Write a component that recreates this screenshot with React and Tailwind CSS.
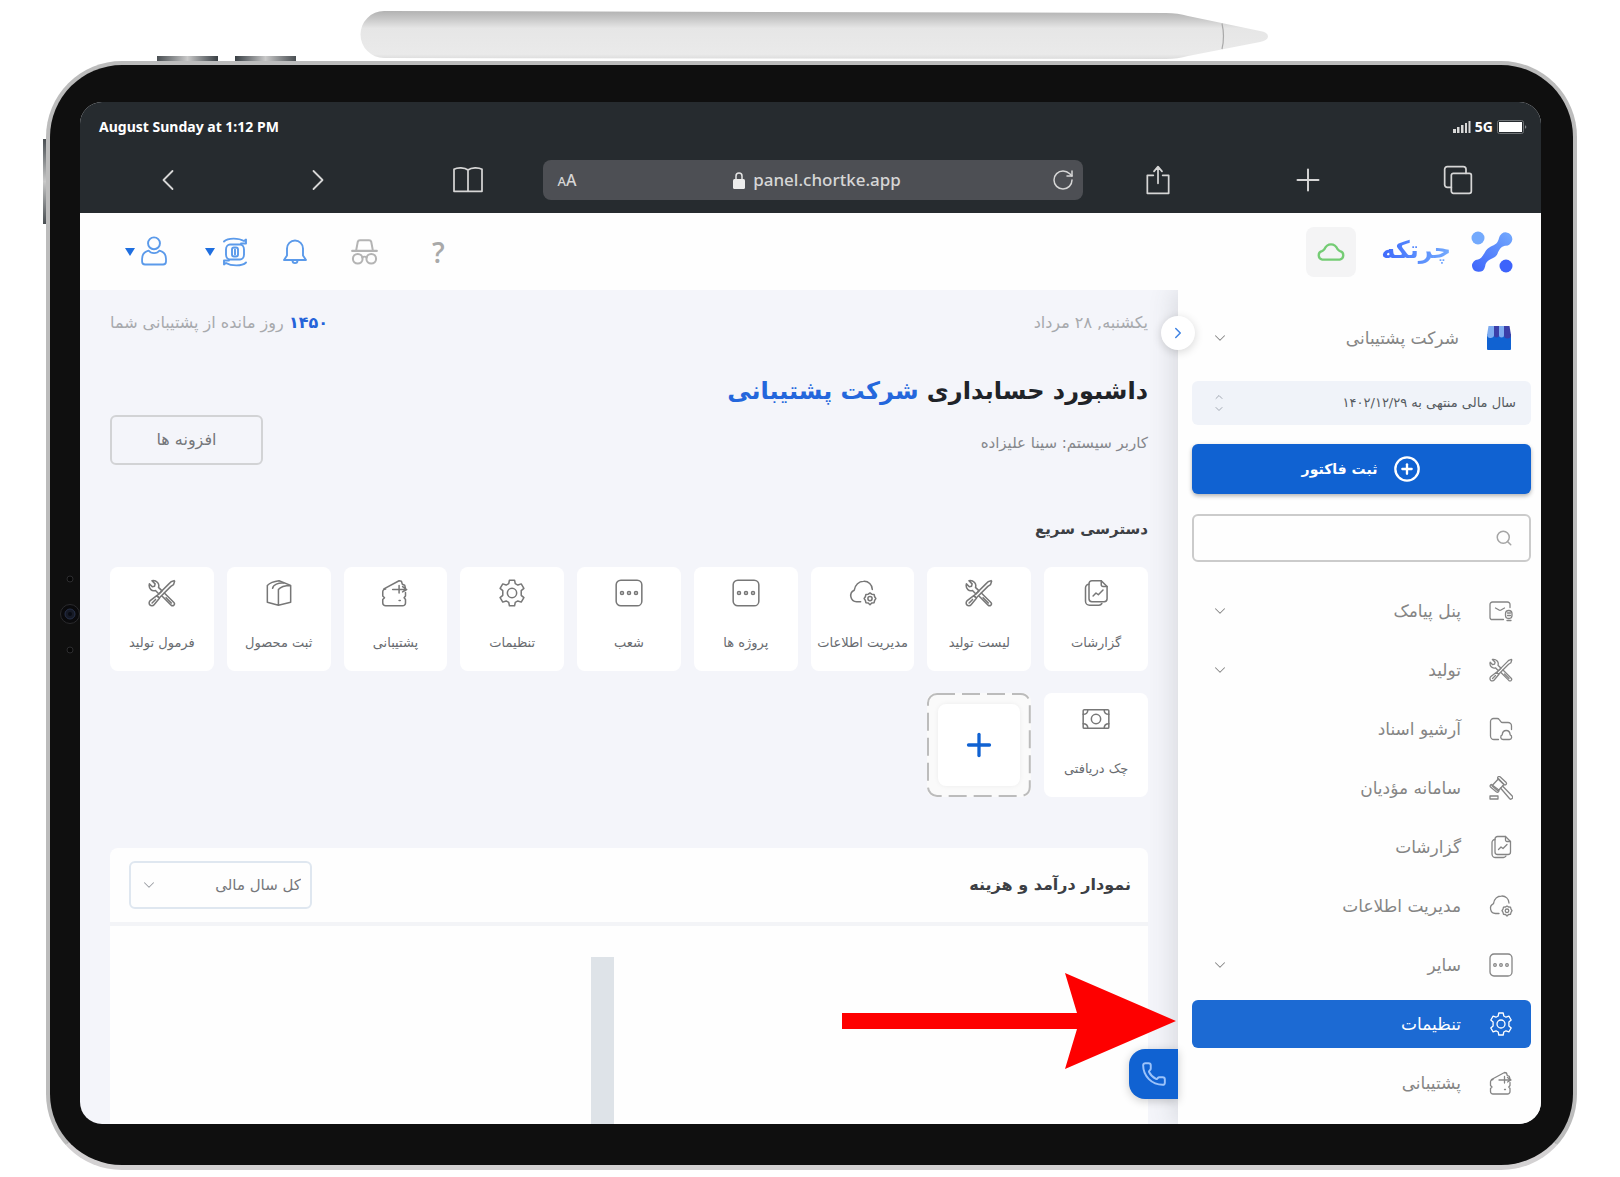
import React, { useState } from 'react';
import { ChevronDown, ChevronLeft, ChevronRight, ChevronUp, CirclePlus, Phone, Plus, RotateCw, Search } from 'lucide-react';

const Icon = ({ className = 'h-6 w-6', strokeWidth = 1.3, children }) => (
  <svg
    className={className}
    viewBox="0 0 24 24"
    fill="none"
    stroke="currentColor"
    strokeWidth={strokeWidth}
    strokeLinecap="round"
    strokeLinejoin="round"
    aria-hidden="true"
  >
    {children}
  </svg>
);

const SmsIcon = (props) => (
  <Icon {...props}>
    <path d="M14.5 20.500H3.500A2 2 0 0 1 1 18.500V5.500A2.500 2.500 0 0 1 3.500 3h15A2.500 2.500 0 0 1 21 5.500v3" />
    <path d="M6.500 9l3.500 2a2 2 0 0 0 2 0l3.500-2" />
    <rect x="16.500" y="11.500" width="6.500" height="8" rx="3.200" />
    <path d="M18.500 14h3M18.500 16.500h3M18 21.500h4" />
  </Icon>
);

const ToolsIcon = (props) => (
  <Icon {...props}>
    <path d="M1.200 4.200c-.5 2 .1 3.800 1.300 4.900 1 .9 2.600 1.100 3.900.7l3 3 2.600-2.600-3-3c.5-1.500.2-3.100-.8-4.200C7 1.800 5.200 1.100 3.400 1.500l2.700 2.700-.5 2-1.900.5z" />
    <path d="M14 12l8.200 8.200a1.600 1.600 0 0 1 0 2.200 1.800 1.800 0 0 1-2.400 0L12.200 14.800" />
    <path d="M19.800 2.300l2.600-.9.400.5-.9 2.900-2.300 1.500-10 10-1.900-1.900 10-10z" />
    <path d="M7.500 14.200l2.300 2.300-4.600 5.500a2.400 2.400 0 0 1-3.600.2 2.500 2.500 0 0 1 .3-3.600z" />
    <path d="M3.500 20.500l3-3M15.500 16l4.500 4.500" />
  </Icon>
);

const ArchiveIcon = (props) => (
  <Icon {...props}>
    <path d="M9.500 22.500H5A3.500 3.500 0 0 1 1.500 19V4.500A3 3 0 0 1 4.500 1.500h3.700c.9 0 1.600.4 2.100 1.100l1.500 2c.4.600 1 .9 1.700.9H19A3.500 3.500 0 0 1 22.500 9v3.500" />
    <path d="M14 22.500a2.400 2.400 0 0 1-.8-4.600c.2-2.500 1.800-4.400 4-4.400s3.800 1.900 4 4.400a2.400 2.400 0 0 1-.8 4.600z" />
  </Icon>
);

const GavelIcon = (props) => (
  <Icon {...props}>
    <path d="M9.500 2.800L3 9.800l6 5.200 6-6.500z" />
    <path d="M11.300 1a1.500 1.500 0 0 0-2.300 2l6 5.500a1.500 1.500 0 0 0 2.200-2zM2.500 8.500a1.500 1.500 0 0 0-1 2.500l6 5a1.500 1.500 0 0 0 2-2.200z" />
    <path d="M11.500 12l9 10.500a1.700 1.700 0 0 0 2.700-2.500L13.500 10" />
    <path d="M1 20h8v3H1z" />
  </Icon>
);

const ReportIcon = (props) => (
  <Icon {...props}>
    <path d="M8.500 1.500h8l5 5V17a2.500 2.500 0 0 1-2.500 2.500H8.500A2.500 2.500 0 0 1 6 17V4a2.500 2.500 0 0 1 2.500-2.500z" />
    <path d="M16.500 1.500V5A1.500 1.500 0 0 0 18 6.500h3.500" />
    <path d="M6 4.500A3 3 0 0 0 3 7.500V19a3.500 3.500 0 0 0 3.500 3.500h8a3 3 0 0 0 2.500-1.500" />
    <path d="M9.500 14.500l2.500-2.500 2 1.500 4-4" />
  </Icon>
);

const CloudDataIcon = (props) => (
  <Icon {...props}>
    <path d="M10 19.500H6.500A5.200 5.200 0 0 1 4.500 9.600c.7-4.600 4-7.600 8-7.600a7 7 0 0 1 7.500 7" />
    <path d="M18 12l1.500 1 2 .2.500 2 1 1.500-1 1.600-.5 2-2 .2-1.500 1.500-1.500-1.500-2-.2-.5-2-1-1.600 1-1.500.5-2 2-.2z" />
    <circle cx="18" cy="16.800" r="1.800" />
  </Icon>
);

const DotsIcon = (props) => (
  <Icon {...props}>
    <rect x="1" y="1" width="22" height="22" rx="4" />
    <circle cx="6" cy="12" r="1.300" />
    <circle cx="12" cy="12" r="1.300" />
    <circle cx="18" cy="12" r="1.300" />
  </Icon>
);

const GearIcon = (props) => (
  <Icon {...props}>
    <circle cx="12" cy="12" r="4" />
    <path d="M9.800 1h4.400l.6 3 2.200 1.200 2.900-1 2.300 3.800-2.300 2v4l2.300 2-2.300 3.800-2.900-1-2.200 1.200-.6 3H9.800l-.6-3L7 18.800l-2.900 1L1.800 16l2.300-2v-4l-2.300-2 2.300-3.800 2.900 1L9.200 4z" />
  </Icon>
);

const SupportIcon = (props) => (
  <Icon {...props}>
    <path d="M4 23a2.500 2.500 0 0 1-2.500-2.500v-3L3 16l-1.500-1.500V11A2.500 2.500 0 0 1 4 8.500M21 14.500L19.800 16l1.200 1.500v3a2.500 2.500 0 0 1-2.500 2.500H4M21 14.500V11.500" />
    <path d="M2.500 8.500L15.500 1.500l2 .5.800 2.500 2 .8.800 3.200M10 9h12M18.500 11l3.500-2-3.500-2.500M15.500 5.500V12M16.500 18.500h-1" />
  </Icon>
);

const BoxIcon = (props) => (
  <Icon {...props}>
    <path d="M2 5.500V20L11.500 22.500V9M11.500 22.500L22 20V5.500M11.500 9C13 7 17 5.500 22 5.500M2 5.500C4 3.500 8 2 12 1.500l10 4" />
    <path d="M6.500 8c.5-3 5-5 9.500-4.500" />
  </Icon>
);

const CashIcon = (props) => (
  <Icon {...props}>
    <rect x="1" y="4" width="22" height="16" rx="1" />
    <circle cx="12" cy="12" r="4" />
    <path d="M1 8c2.500 0 4-1.500 4-4M23 8c-2.500 0-4-1.500-4-4M1 16c2.500 0 4 1.500 4 4M23 16c-2.500 0-4 1.500-4 4" />
  </Icon>
);

const StoreIcon = () => (
  <svg className="h-6 w-6" viewBox="0 0 24 24" aria-hidden="true">
    <path d="M0 8h24v15a1 1 0 0 1-1 1H1a1 1 0 0 1-1-1z" fill="#1062d2" />
    <path d="M1.500 0H7v8a3.500 3.500 0 0 1-7 1z" fill="#7eacf0" />
    <path d="M12 0h5v9a2.500 2.500 0 0 1-5 0z" fill="#7eacf0" />
    <path d="M7 0h5v9a2.500 2.500 0 0 1-5 0z" fill="#3b3fa8" />
    <path d="M17 0h5.500L24 9a3.500 3.500 0 0 1-7 0z" fill="#3b3fa8" />
  </svg>
);

const LogoMark = () => (
  <svg className="h-[42px] w-[42px]" viewBox="0 0 42 42" aria-hidden="true">
    <defs>
      <linearGradient id="logoStroke" x1="0" y1="1" x2="1" y2="0">
        <stop offset="0" stopColor="#3d63fb" />
        <stop offset="1" stopColor="#74aafd" />
      </linearGradient>
    </defs>
    <path
      d="M1 35a6.500 6.500 0 0 1 6-6.500c4-1 6-6 8-9 1.500-2.500 4-3.500 7-5 3-1.500 5-3 6-7.500a6.700 6.700 0 1 1 6 7.700c-4 .8-6 4-7.500 8-1.500 3.500-4 4-7 5.500-3 1.500-5 3.500-5.500 7.500A6.600 6.600 0 0 1 1 35z"
      fill="url(#logoStroke)"
    />
    <circle cx="7" cy="7" r="6.500" fill="#74aafd" />
    <circle cx="35" cy="35" r="6.500" fill="#3d63fb" />
  </svg>
);

const UserIcon = () => (
  <Icon className="h-8 w-[26px]" strokeWidth={1.8}>
    <circle cx="12" cy="4" r="5.500" />
    <path d="M6.500 10.500C2.500 11.500 0 14.500 0 19v2.500A3 3 0 0 0 3 24.500h18a3 3 0 0 0 3-3V19c0-4.500-2.500-7.500-6.500-8.500-2.500 3.500-8.500 3.500-11 0z" transform="translate(1 1) scale(0.920)" />
  </Icon>
);

const CoinIcon = () => (
  <Icon className="h-8 w-6" strokeWidth={1.9}>
    <path d="M7 4.500h10c2 0 4 2 4 5v5c0 3-2 5-4 5H7c-2 0-4-2-4-5v-5c0-3 2-5 4-5z" />
    <rect x="9" y="7.500" width="6" height="9" rx="2" />
    <path d="M12 9.500v5M1 1.500C5-2.500 16-2 21 1l2-1.500v4h-5M23 22.500c-4 4-15 3.500-20 .5l-2 1.500v-4h5" />
  </Icon>
);

const BellIcon = () => (
  <Icon className="h-7 w-6" strokeWidth={1.9}>
    <path d="M4 8.500a8 8 0 0 1 16 0v7l3 4.500H1l3-4.500zM9.500 20.500c0 3.500 5 3.500 5 0" />
  </Icon>
);

const SpyIcon = () => (
  <Icon className="h-7 w-[27px]" strokeWidth={1.8}>
    <path d="M1 11h22M4.500 11l1.500-8A2 2 0 0 1 8 1.500h8A2 2 0 0 1 18 3l1.500 8" />
    <circle cx="6" cy="18" r="4.300" />
    <circle cx="18" cy="18" r="4.300" />
    <path d="M10 17c1-1 3-1 4 0" />
  </Icon>
);

const CloudIcon = () => (
  <Icon className="h-7 w-7" strokeWidth={2}>
    <path d="M4.500 18.500a3.700 3.700 0 0 1-.3-7.200c.8-.3 1.500-.8 2-1.500C7.500 7 9.800 5.500 12 5.500s4.500 1.500 5.800 4.300c.5.700 1.200 1.200 2 1.500a3.700 3.700 0 0 1-.3 7.200z" />
  </Icon>
);

const menuItems = [
  { key: 'sms', label: 'پنل پیامک', icon: SmsIcon, hasChildren: true },
  { key: 'production', label: 'تولید', icon: ToolsIcon, hasChildren: true },
  { key: 'archive', label: 'آرشیو اسناد', icon: ArchiveIcon },
  { key: 'tax', label: 'سامانه مؤدیان', icon: GavelIcon },
  { key: 'reports', label: 'گزارشات', icon: ReportIcon },
  { key: 'data', label: 'مدیریت اطلاعات', icon: CloudDataIcon },
  { key: 'other', label: 'سایر', icon: DotsIcon, hasChildren: true },
  { key: 'settings', label: 'تنظیمات', icon: GearIcon },
  { key: 'support', label: 'پشتیبانی', icon: SupportIcon }
];

const shortcuts = [
  { key: 'reports', label: 'گزارشات', icon: ReportIcon },
  { key: 'production-list', label: 'لیست تولید', icon: ToolsIcon },
  { key: 'data', label: 'مدیریت اطلاعات', icon: CloudDataIcon },
  { key: 'projects', label: 'پروژه ها', icon: DotsIcon },
  { key: 'branches', label: 'شعب', icon: DotsIcon },
  { key: 'settings', label: 'تنظیمات', icon: GearIcon },
  { key: 'support', label: 'پشتیبانی', icon: SupportIcon },
  { key: 'product', label: 'ثبت محصول', icon: BoxIcon },
  { key: 'formula', label: 'فرمول تولید', icon: ToolsIcon },
  { key: 'cheque', label: 'چک دریافتی', icon: CashIcon }
];

const Pencil = () => (
  <svg className="h-12 w-[909px]" viewBox="0 0 909 48" aria-hidden="true">
    <defs>
      <linearGradient id="pencilBody" x1="0" y1="0" x2="0" y2="1">
        <stop offset="0" stopColor="#b2b2b2" />
        <stop offset="0.150" stopColor="#c6c6c6" />
        <stop offset="0.360" stopColor="#e6e6e6" />
        <stop offset="0.900" stopColor="#eaeaea" />
        <stop offset="1" stopColor="#dcdcdc" />
      </linearGradient>
    </defs>
    <path
      d="M24 0L806 2Q818 2 828 5L900 20Q908 21 908 25.500Q908 29 900 31L828 45Q818 48 806 48L24 47A23.500 23.500 0 0 1 24 0z"
      fill="url(#pencilBody)"
    />
    <path d="M862 12.500q3 13 0 25.500" fill="none" stroke="#a9a9a9" strokeWidth="1.200" />
  </svg>
);

const BrowserBar = () => (
  <div dir="ltr" className="h-[111px] bg-[#262b2f] font-['Noto_Sans','Open_Sans',sans-serif] text-[#d6d6d6]">
    <div className="flex h-[50px] items-center justify-between pr-[14px] pl-[19px] text-[14px] leading-5 font-bold text-white">
      <span>August Sunday at 1:12 PM</span>
      <div className="flex items-center gap-1">
        <svg className="h-3 w-[18px]" viewBox="0 0 18 12" fill="#d8d8d8" aria-hidden="true">
          <path d="M0 8h3v4H0zM4 6h2.500v6H4zM8 4h2.500v8H8zM12 2h2v10h-2zM15.500 0h2v12h-2z" />
        </svg>
        <span>5G</span>
        <svg className="h-[14px] w-[30px]" viewBox="0 0 30 14" aria-hidden="true">
          <rect x="0.500" y="0.500" width="26" height="13" rx="2" fill="none" stroke="#6f7376" />
          <rect x="2" y="2" width="23" height="10" fill="#fff" />
          <path d="M28 5v4l1.500-2z" fill="#8a8d90" />
        </svg>
      </div>
    </div>
    <div className="flex h-14 items-center pr-2 pl-[13px]">
      <button aria-label="Back" className="flex w-[150px] justify-center">
        <ChevronLeft className="h-9 w-9" strokeWidth={1.2} />
      </button>
      <button aria-label="Forward" className="flex w-[150px] justify-center">
        <ChevronRight className="h-9 w-9" strokeWidth={1.2} />
      </button>
      <button aria-label="Bookmarks" className="flex w-[150px] justify-center">
        <Icon className="h-8 w-8">
          <path d="M12 4.500v16M12 4.500C9.500 2.500 4 2.500 1.500 4v16.500h21V4C20 2.500 14.500 2.500 12 4.500z" />
        </Icon>
      </button>
      <div className="flex h-10 min-w-0 flex-1 items-center justify-between rounded-lg bg-[#4d4f54] px-2 text-[17px] leading-5 font-medium">
        <button aria-label="Text size" className="w-8 text-[16px]">
          <span className="text-[13px]">A</span>A
        </button>
        <a href="#site" className="flex items-center gap-2">
          <svg className="h-[18px] w-3" viewBox="0 0 12 18" aria-hidden="true">
            <path d="M3 9V5a3 3 0 0 1 6 0v4" fill="none" stroke="#e5e5e5" strokeWidth="1.500" />
            <rect x="0" y="8" width="12" height="10" rx="1.500" fill="#ececec" />
          </svg>
          panel.chortke.app
        </a>
        <button aria-label="Reload">
          <RotateCw className="h-6 w-6" strokeWidth={1.5} />
        </button>
      </div>
      <button aria-label="Share" className="flex w-[150px] justify-center">
        <Icon className="h-8 w-8">
          <path d="M8.500 8.500H4v13.500h16V8.500h-4.500M12 14.500V3M9 5.500L12 2l3 3.500" />
        </Icon>
      </button>
      <button aria-label="New tab" className="flex w-[150px] justify-center">
        <Plus className="h-9 w-9" strokeWidth={1.300} />
      </button>
      <button aria-label="Tabs" className="flex w-[150px] justify-center">
        <Icon className="h-8 w-8">
          <rect x="7" y="7" width="15" height="15" rx="1.500" />
          <path d="M7 17.500H4A2 2 0 0 1 2 15.500V4a2 2 0 0 1 2-2h12a2 2 0 0 1 2 2v3" />
        </Icon>
      </button>
    </div>
  </div>
);

const Caret = () => (
  <svg className="h-2 w-[10px]" viewBox="0 0 10 8" fill="#1f6fe0" aria-hidden="true">
    <path d="M0 0h10L5 8z" />
  </svg>
);

const AppHeader = () => (
  <header className="flex h-[77px] items-center justify-between bg-[#fefefe] pr-7 pl-[45px]">
    <div className="flex items-center">
      <LogoMark />
      <span className="mr-5 h-[50px] w-[76px] bg-linear-to-l from-[#74aafd] to-[#3d63fb] bg-clip-text text-[24px] leading-[46px] font-bold whitespace-nowrap text-transparent">
        چرتکه
      </span>
      <button aria-label="وضعیت اتصال" className="mr-[19px] flex h-[50px] w-[50px] items-center justify-center rounded-lg bg-[#f4f4f5] text-[#74cc74]">
        <CloudIcon />
      </button>
    </div>
    <div className="flex items-center text-[#5b9aea]">
      <button aria-label="راهنما" className="ml-[54px] font-['Open_Sans',sans-serif] text-[28px] leading-8 font-semibold text-[#a9a9a9]">
        ?
      </button>
      <button aria-label="حالت ناشناس" className="ml-[44px] text-[#b4b4b4]">
        <SpyIcon />
      </button>
      <button aria-label="اعلان ها" className="ml-[36px]">
        <BellIcon />
      </button>
      <button aria-label="واحد پول" className="ml-[38px] flex items-center gap-2">
        <CoinIcon />
        <Caret />
      </button>
      <button aria-label="حساب کاربری" className="flex items-center gap-[6px]">
        <UserIcon />
        <Caret />
      </button>
    </div>
  </header>
);

const Sidebar = () => {
  const [active, setActive] = useState('settings');

  return (
    <aside className="relative w-[363px] shrink-0 bg-[#fefefe] pt-6 pr-[10px] pb-[17px] pl-[14px] text-[#858585] shadow-[-4px_0_24px_rgba(70,72,80,0.16)]">
      <button aria-label="بستن منو" className="absolute top-[26px] -left-[17px] flex h-[34px] w-[34px] items-center justify-center rounded-full bg-white text-[#3f83e3] shadow-[0_2px_10px_rgba(0,0,0,0.16)]">
        <ChevronRight className="h-[18px] w-[18px]" strokeWidth={2} />
      </button>

      <button className="flex h-12 w-full items-center pr-5 pl-[19px]">
        <StoreIcon />
        <span className="mr-7 text-[17px] leading-6">شرکت پشتیبانی</span>
        <ChevronDown className="mr-auto h-[18px] w-[18px]" strokeWidth={1.4} />
      </button>

      {/* Fiscal year */}
      <div className="relative mt-[19px] text-[#555a60]">
        <select aria-label="سال مالی" className="h-11 w-full appearance-none rounded-md bg-[#f0f3f9] pr-[15px] pl-10 text-[13px] leading-5">
          <option>سال مالی منتهی به ۱۴۰۲/۱۲/۲۹</option>
        </select>
        <div className="pointer-events-none absolute top-[10px] left-5 text-[#a3a9b3]">
          <ChevronUp className="h-3 w-[14px]" strokeWidth={2} />
          <ChevronDown className="h-3 w-[14px]" strokeWidth={2} />
        </div>
      </div>

      <button className="mt-[19px] flex h-[50px] w-full items-center justify-center gap-4 rounded-md bg-[#1062d2] text-[14px] leading-6 font-bold text-white shadow-[0_2px_4px_rgba(0,0,0,0.3)]">
        <CirclePlus className="h-7 w-7" strokeWidth={2} />
        ثبت فاکتور
      </button>

      <label className="mt-5 flex h-12 items-center rounded-md border-2 border-[#cbcbcb] pr-4">
        <Search className="h-[18px] w-[18px] text-[#a5a5a5]" strokeWidth={2} />
        <input type="text" aria-label="جستجو" className="h-full min-w-0 flex-1 bg-transparent px-3 outline-none" />
      </label>

      <nav className="mt-[25px] flex flex-col gap-[11px]">
        {menuItems.map((item) => (
          <button
            key={item.key}
            onClick={() => setActive(item.key)}
            className={`flex h-12 w-full items-center rounded-md pr-[18px] pl-[19px] text-[17px] leading-6 ${
              active === item.key ? 'bg-[#1c6ad3] text-white' : ''
            }`}
          >
            <item.icon />
            <span className="mr-7">{item.label}</span>
            {item.hasChildren && <ChevronDown className="mr-auto h-[18px] w-[18px]" strokeWidth={1.4} />}
          </button>
        ))}
      </nav>
    </aside>
  );
};

const Dashboard = () => (
  <main className="flex min-w-0 flex-1 flex-col px-[30px] pt-[21px]">
    <div className="flex items-center justify-between text-[16px] leading-6 text-[#a7a9ad]">
      <span>یکشنبه, ۲۸ مرداد</span>
      <span>
        <b className="text-[#2563d9]">۱۴۵۰</b> روز مانده از پشتیبانی شما
      </span>
    </div>

    <div className="mt-9 flex items-end justify-between">
      <div>
        <h1 className="text-[24px] leading-10 font-bold text-[#202328]">
          داشبورد حسابداری <span className="text-[#2467dc]">شرکت پشتیبانی</span>
        </h1>
        <p className="mt-5 text-[15px] leading-6 text-[#85878c]">کاربر سیستم: سینا علیزاده</p>
      </div>
      <button className="mb-[-10px] h-[50px] w-[153px] rounded-md border-2 border-[#d2d3d5] text-[16px] leading-6 text-[#75777b]">
        افزونه ها
      </button>
    </div>

    {/* Quick access */}
    <h2 className="mt-[60px] text-[15px] leading-7 font-bold text-[#3c3f44]">دسترسی سریع</h2>
    <div className="mt-6 grid grid-cols-9 gap-x-[13px] gap-y-[22px]">
      {shortcuts.map((item) => (
        <a
          key={item.key}
          href={`#${item.key}`}
          className="flex h-[104px] flex-col items-center justify-between rounded-lg bg-white pt-3 pb-4 text-[#777]"
        >
          <item.icon className="h-7 w-7" />
          <span className="text-[13px] leading-6 whitespace-nowrap text-[#686b70]">{item.label}</span>
        </a>
      ))}
      <button aria-label="افزودن" className="relative flex h-[104px] items-center justify-center rounded-lg bg-[#fafafa]">
        <svg className="absolute inset-0 h-full w-full overflow-visible p-px" aria-hidden="true">
          <rect width="100%" height="100%" rx="9" fill="none" stroke="#bcbcbc" strokeWidth="2" strokeDasharray="18 7" />
        </svg>
        <span className="flex h-[82px] w-[82px] items-center justify-center rounded-lg bg-white text-[#1062d2] shadow-[0_0_5px_rgba(0,0,0,0.06)]">
          <Plus className="h-9 w-9" strokeWidth={2.2} />
        </span>
      </button>
    </div>

    {/* Income chart */}
    <section className="mt-[51px] flex flex-1 flex-col rounded-t-lg bg-[#fefefe]">
      <div className="flex h-[78px] items-center justify-between border-b-4 border-[#f3f4f7] pr-[17px] pl-[19px]">
        <h2 className="text-[16px] leading-6 font-bold text-[#3c3f44]">نمودار درآمد و هزینه</h2>
        <div className="relative">
          <select aria-label="بازه زمانی" className="h-12 w-[183px] appearance-none rounded-md border-2 border-[#dfe7f0] bg-transparent pr-[9px] pl-10 text-[15px] leading-6 text-[#75777b]">
            <option>کل سال مالی</option>
          </select>
          <ChevronDown className="pointer-events-none absolute top-[15px] left-[11px] h-[18px] w-[18px] text-[#9a9da3]" strokeWidth={1.400} />
        </div>
      </div>
      <div className="flex flex-1 justify-center pt-[31px]">
        <div className="mr-[53px] w-[23px] bg-[#dee3e8]" />
      </div>
    </section>
  </main>
);

const App = () => (
  <div className="relative min-h-screen bg-white pt-[11px] pr-[43px] pb-[7px] pl-[46px]">
    <div className="flex justify-center pl-[6px]">
      <Pencil />
    </div>

    {/* Tablet frame */}
    <div className="relative mt-[2px] rounded-[76px] border-4 border-b-[5px] border-[#bcbcbc] border-b-[#d3d1d2] bg-[#0f0f0f] pt-[37px] pr-8 pb-[41px] pl-[30px]">
      <div className="absolute -top-[9px] left-[107px] flex gap-[17px]">
        <span className="h-[5px] w-[61px] bg-linear-to-r from-[#4a4f53] via-[#c9c9c9] to-[#3a4045]" />
        <span className="h-[5px] w-[61px] bg-linear-to-r from-[#3a4045] via-[#c9c9c9] to-[#4a4f53]" />
      </div>
      <span className="absolute top-[74px] -left-[7px] h-[85px] w-[3px] bg-linear-to-b from-[#4a4f53] via-[#c9c9c9] to-[#4a4f53]" />
      <svg className="absolute top-[510px] left-[10px] h-20 w-5" viewBox="0 0 20 80" fill="none" aria-hidden="true">
        <circle cx="10" cy="4" r="3" fill="#070707" stroke="#2c2c2e" />
        <circle cx="10" cy="39" r="9.500" fill="#0a0a0c" stroke="#2a2a2d" />
        <circle cx="10" cy="39" r="5" fill="#161a26" stroke="#27304a" />
        <circle cx="10" cy="39" r="2" fill="#080a12" />
        <circle cx="10" cy="75" r="3" fill="#070707" stroke="#2c2c2e" />
      </svg>

      <div className="relative overflow-hidden rounded-[22px] bg-[#f4f5fa]">
        <BrowserBar />
        <div dir="rtl" className="font-['DejaVu_Sans',sans-serif]">
          <AppHeader />
          <div className="relative flex overflow-hidden">
            <Sidebar />
            <Dashboard />
            <button aria-label="تماس" className="absolute right-[363px] bottom-[25px] flex h-[50px] w-[49px] items-center justify-center rounded-l-2xl bg-[#1062d2] text-[#9cc3fa] shadow-[0_2px_10px_rgba(0,0,0,0.2)]">
              <Phone className="h-[26px] w-[26px]" strokeWidth={1.8} />
            </button>
          </div>
        </div>

        {/* Pointer to the active menu item */}
        <svg className="absolute right-[365px] bottom-[55px] h-[96px] w-[334px]" viewBox="0 0 334 96" fill="#fe0000" aria-hidden="true">
          <path d="M0 40h235L223 0l111 48L223 96l12-40H0z" />
        </svg>
      </div>
    </div>
  </div>
);

export default App;
